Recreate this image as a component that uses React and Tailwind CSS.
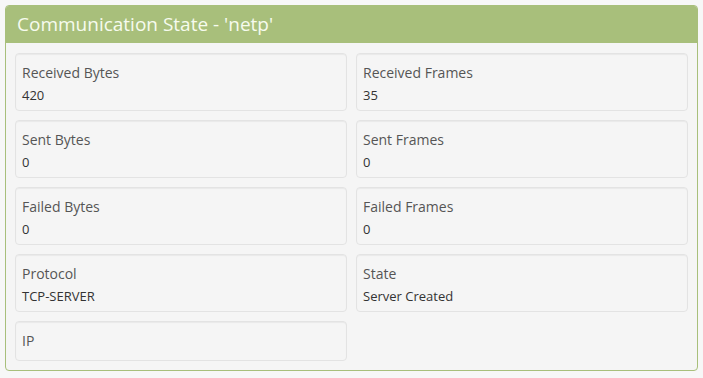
export default function App() {
  const rows = [
    [["Received Bytes", "420"], ["Received Frames", "35"]],
    [["Sent Bytes", "0"], ["Sent Frames", "0"]],
    [["Failed Bytes", "0"], ["Failed Frames", "0"]],
    [["Protocol", "TCP-SERVER"], ["State", "Server Created"]],
  ];
  const Card = ({ label, value }) => (
    <div className="rounded-[4px] border border-[#e3e3e3] bg-[#f5f5f5] shadow-[inset_0_1px_1px_rgba(0,0,0,0.05)] px-[6px] pt-[9px] pb-[7px] h-[58px]">
      <div className="text-[14px] leading-[20px] text-[#555]">{label}</div>
      <div className="text-[13px] leading-[20px] mt-[2px] text-[#333]">{value}</div>
    </div>
  );
  return (
    <div className="w-[703px] h-[378px] bg-[#f7f7f7] p-[5px] pb-0" style={{ fontFamily: '"Open Sans", "Noto Sans", sans-serif' }}>
      <div className="w-[693px] h-[366px] rounded-[4px] border border-[#a8bf7b] bg-[#f5f5f5] overflow-hidden">
        <div className="h-[37px] bg-[#a8bf7b] px-[11px] flex items-center text-[19px] text-[#f6fbee]">
          Communication State - 'netp'
        </div>
        <div className="px-[9px] pt-[10px] grid grid-cols-2 gap-x-[9px] gap-y-[9px]">
          {rows.map((r, i) => [
            <Card key={i + "a"} label={r[0][0]} value={r[0][1]} />,
            <Card key={i + "b"} label={r[1][0]} value={r[1][1]} />,
          ])}
          <div className="rounded-[4px] border border-[#e3e3e3] bg-[#f5f5f5] shadow-[inset_0_1px_1px_rgba(0,0,0,0.05)] px-[6px] h-[40px] flex items-center">
            <div className="text-[14px] leading-[20px] text-[#555]">IP</div>
          </div>
        </div>
      </div>
    </div>
  );
}
